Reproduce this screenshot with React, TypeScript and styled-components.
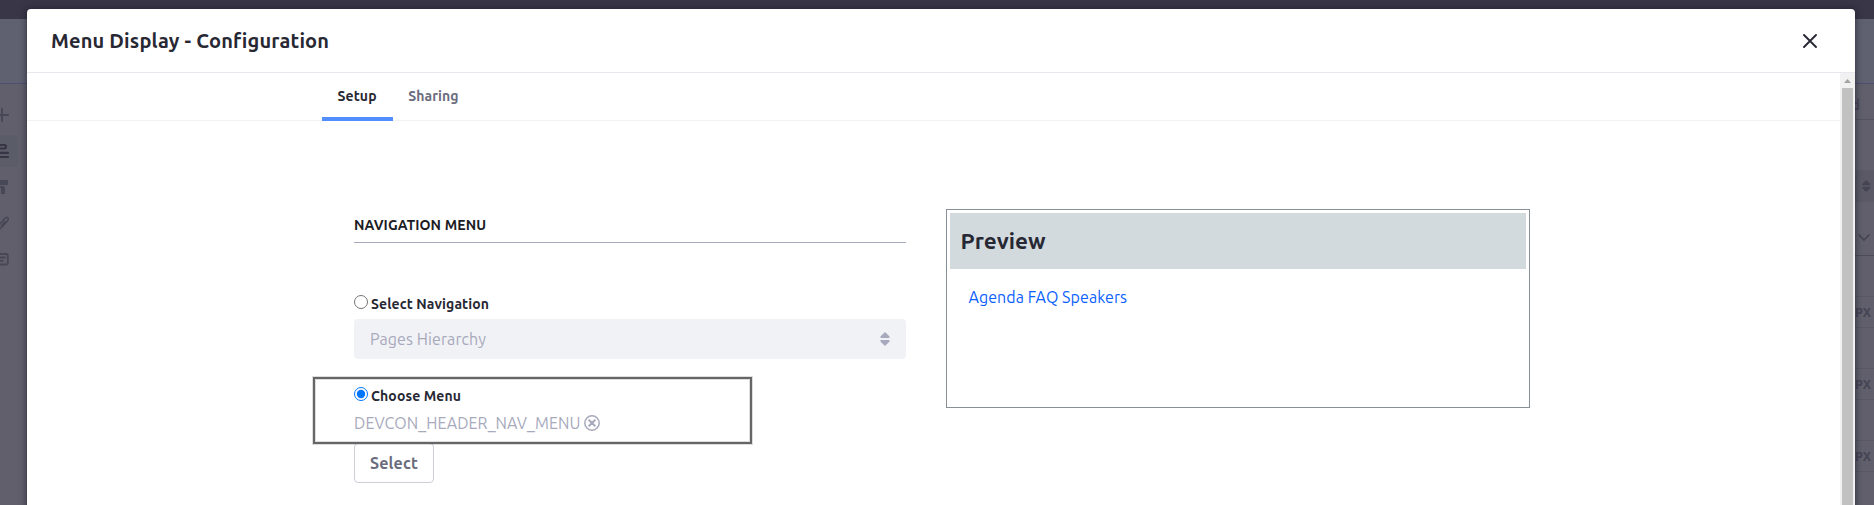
import React from 'react';
import styled, { createGlobalStyle } from 'styled-components';

const GlobalStyle = createGlobalStyle`
  *, *::before, *::after { box-sizing: border-box; }
  body { margin: 0; font-family: Ubuntu, "Noto Sans", sans-serif; color: #272833; overflow: hidden; }
`;

/* Dimmed editor behind the dialog */
const Page = styled.div`
  position: relative;
  display: flex;
  flex-direction: column;
  height: 505px;
  overflow: hidden;
  background: #605f6b;
`;
const ControlBar = styled.div`height: 19px; flex: none; background: #393647;`;
const Toolbar = styled.div`height: 65px; flex: none; background: #5f6070; border-bottom: 1px solid #4e5073;`;
const Workspace = styled.div`display: flex; justify-content: space-between; flex: 1; min-height: 0;`;
const Rail = styled.nav`
  display: flex;
  flex-direction: column;
  width: 27px;
  padding-top: 15px;
  gap: 4px;
`;
const RailItem = styled.div<{ $active?: boolean }>`
  display: flex;
  align-items: center;
  justify-content: flex-end;
  width: 18px;
  height: 32px;
  padding-right: 9px;
  overflow: hidden;
  border-radius: 0 4px 4px 0;
  color: ${p => (p.$active ? '#363545' : '#484755')};
  background: ${p => (p.$active ? '#5a5c68' : 'transparent')};
  svg { flex: none; }
`;
const SidePanel = styled.aside`
  width: 19px;
  display: flex;
  flex-direction: column;
  color: #454453;
  background: #605f6b;
`;
const PanelTitle = styled.div`
  display: flex;
  justify-content: flex-end;
  height: 36px;
  flex: none;
  padding: 10px 14px 0 0;
  border-bottom: 1px solid #53525f;
  font-size: 14px;
  line-height: 22px;
  font-weight: 700;
  color: #484759;
`;
const PanelSelect = styled.div`
  height: 32px;
  flex: none;
  margin-top: 50px;
  display: flex;
  align-items: center;
  padding-left: 7px;
  background: #5a5965;
`;
const PanelToggle = styled.div`
  height: 54px;
  flex: none;
  padding: 29px 0 0 3px;
  border-bottom: 1px solid #4d4c5b;
  svg { display: block; }
`;
const Unit = styled.div`
  height: 32px;
  flex: none;
  margin-top: 40px;
  border: solid #595864;
  border-width: 1px 0;
  font-size: 12.5px;
  line-height: 31px;
  font-weight: 700;
`;

/* Dialog */
const Dialog = styled.section`
  position: absolute;
  top: 9px;
  left: 27px;
  width: 1828px;
  height: 520px;
  display: flex;
  flex-direction: column;
  background: #fff;
  border-radius: 4px 4px 0 0;
  overflow: hidden;
  box-shadow: 0 0 7px rgba(20, 18, 35, 0.7);
`;
const DialogHeader = styled.header`
  height: 64px;
  flex: none;
  display: flex;
  align-items: center;
  justify-content: space-between;
  padding: 0 38px 0 24px;
  border-bottom: 1px solid #e7e7ed;
`;
const DialogTitle = styled.h1`
  margin: 0;
  font-size: 20px;
  line-height: 30px;
  font-weight: 700;
  letter-spacing: 0.17px;
`;
const CloseButton = styled.button`
  display: flex;
  padding: 0;
  border: 0;
  background: none;
  color: #272833;
`;
const DialogBody = styled.div`flex: 1; min-height: 0; display: flex;`;
const Content = styled.div`flex: 1; min-width: 0;`;
const ScrollTrack = styled.div`
  width: 15px;
  display: flex;
  flex-direction: column;
  align-items: center;
  background: #f1f1f1;
  svg { display: block; flex: none; }
`;
const ScrollThumb = styled.div`flex: 1; width: 11px; background: #c1c1c1;`;

const Tabs = styled.div`
  display: flex;
  height: 48px;
  padding-left: 295px;
  border-bottom: 1px solid #f1f2f5;
`;
const Tab = styled.div<{ $active?: boolean }>`
  height: 48px;
  padding: 6px 16px 0 15.5px;
  border-bottom: 4px solid ${p => (p.$active ? '#528eff' : 'transparent')};
  color: ${p => (p.$active ? '#272833' : '#6b6c7e')};
  font-size: 14px;
  line-height: 34px;
  font-weight: 700;
  letter-spacing: 0.1px;
`;
const Columns = styled.div`
  display: grid;
  grid-template-columns: 552px 584px;
  column-gap: 40px;
  align-items: start;
  padding: 88px 0 0 327px;
`;
const Form = styled.form`display: flex; flex-direction: column; padding-top: 4px;`;
const SectionTitle = styled.h2`
  margin: 0 0 50px;
  padding-bottom: 5px;
  border-bottom: 1px solid #a7a9bc;
  color: #1c1c24;
  font-size: 14px;
  line-height: 24px;
  font-weight: 700;
  letter-spacing: 0.12px;
`;
const Option = styled.label`
  display: flex;
  gap: 3px;
  height: 22px;
  font-size: 14px;
  line-height: 22px;
  font-weight: 700;
  letter-spacing: 0.11px;
`;
const Radio = styled.input`width: 14px; height: 14px; margin: 1.5px 0 0;`;
const SelectField = styled.div`
  display: flex;
  align-items: center;
  justify-content: space-between;
  height: 40px;
  margin: 4px 0 26px;
  padding: 0 16px;
  border-radius: 4px;
  background: #f1f2f5;
  color: #a7a9bc;
  font-size: 16px;
  letter-spacing: 0.09px;
`;
const MenuChoice = styled.div`
  position: relative;
  display: flex;
  flex-direction: column;
  align-items: flex-start;
`;
const Highlight = styled.div`
  position: absolute;
  z-index: 1;
  left: -41px;
  top: -8px;
  width: 439px;
  height: 67px;
  border: 2px solid #666;
  box-shadow: 0 0 0 1px rgba(100, 100, 100, 0.22), inset 0 0 0 1px rgba(100, 100, 100, 0.22);
`;
const MenuName = styled.div`
  display: flex;
  align-items: center;
  gap: 4px;
  height: 24px;
  margin: 4px 0 8px;
  color: #a7a9bc;
  font-size: 16px;
  line-height: 24px;
  letter-spacing: 0.08px;
`;
const SelectButton = styled.button`
  width: 80px;
  height: 40px;
  padding: 0;
  border: 1px solid #cdced9;
  border-radius: 4px;
  background: #fff;
  color: #6b6c7e;
  font: inherit;
  font-weight: 700;
  line-height: 38px;
  letter-spacing: 0.15px;
`;
const Preview = styled.section`height: 199px; padding: 3px; border: 1px solid #869096;`;
const PreviewTitle = styled.h3`
  margin: 0;
  height: 56px;
  padding-left: 10.5px;
  background: #d3dadd;
  font-size: 22.5px;
  line-height: 56px;
  font-weight: 700;
`;
const PreviewLinks = styled.div`
  padding: 16px 0 0 18.5px;
  color: #0b5fff;
  font-size: 16px;
  line-height: 24px;
  letter-spacing: 0.06px;
`;

const CaretDouble = ({ size = 14 }: { size?: number }) => (
  <svg width={(size * 10) / 14} height={size} viewBox="0 0 10 14" fill="currentColor">
    <path d="M5 0 9.6 4.6Q9.8 6 9 6H1Q.2 6 .4 4.6ZM5 14 .4 9.4Q.2 8 1 8H9Q9.8 8 9.6 9.4Z" />
  </svg>
);
const Stroke = ({ d, width = 2 }: { d: string; width?: number }) => (
  <svg width="16" height="16" viewBox="0 0 16 16" fill="none" stroke="currentColor" strokeWidth={width} strokeLinecap="round" strokeLinejoin="round">
    <path d={d} />
  </svg>
);

export default function App() {
  return (
    <Page>
      <GlobalStyle />
      <ControlBar />
      <Toolbar />
      <Workspace>
        <Rail>
          <RailItem><Stroke d="M9 2V14M2 8H15" /></RailItem>
          <RailItem $active><Stroke width={2.2} d="M2 2H11.5Q13 2 13 3.5T11.5 5.5H2M1 9.8H15M1 14H15" /></RailItem>
          <RailItem>
            <svg width="16" height="16" viewBox="0 0 16 16" fill="currentColor">
              <path d="M1 1H14Q15 1 15 2V5Q15 6 14 6H1ZM4 7H10Q12 7 12 9V15H8V9H4Z" />
            </svg>
          </RailItem>
          <RailItem><Stroke width={1.6} d="M6 10 12 3.2Q14 1.8 15 3T14 6.5L8 13Q6 15 4 13M8.5 11 12 6.5" /></RailItem>
          <RailItem><Stroke width={1.8} d="M1 3H13Q14.8 3 14.8 4.8V11.7Q14.8 13.5 13 13.5H1M5 6.5H12M5 9.8H10" /></RailItem>
        </Rail>
        <SidePanel>
          <PanelTitle>d</PanelTitle>
          <PanelSelect><CaretDouble size={12} /></PanelSelect>
          <PanelToggle>
            <svg width="12" height="12" viewBox="0 0 12 12" fill="none" stroke="currentColor" strokeWidth="1.7" strokeLinecap="round">
              <path d="M1 4 6 9 11 4" />
            </svg>
          </PanelToggle>
          <Unit>PX</Unit>
          <Unit>PX</Unit>
          <Unit>PX</Unit>
        </SidePanel>
      </Workspace>

      <Dialog>
        <DialogHeader>
          <DialogTitle>Menu Display - Configuration</DialogTitle>
          <CloseButton aria-label="Close">
            <svg width="14" height="14" viewBox="0 0 14 14" fill="none" stroke="currentColor" strokeWidth="1.9" strokeLinecap="round">
              <path d="M1 1 13 13M13 1 1 13" />
            </svg>
          </CloseButton>
        </DialogHeader>
        <DialogBody>
          <Content>
            <Tabs>
              <Tab $active>Setup</Tab>
              <Tab>Sharing</Tab>
            </Tabs>
            <Columns>
              <Form>
                <SectionTitle>NAVIGATION MENU</SectionTitle>
                <Option><Radio type="radio" name="source" />Select Navigation</Option>
                <SelectField>Pages Hierarchy<CaretDouble /></SelectField>
                <MenuChoice>
                  <Option><Radio type="radio" name="source" defaultChecked />Choose Menu</Option>
                  <MenuName>
                    DEVCON_HEADER_NAV_MENU
                    <svg width="16" height="16" viewBox="0 0 16 16" fill="none" stroke="currentColor">
                      <circle cx="8" cy="8" r="7.2" strokeWidth="1.5" />
                      <path d="M5.2 5.2 10.8 10.8M10.8 5.2 5.2 10.8" strokeWidth="2" strokeLinecap="round" />
                    </svg>
                  </MenuName>
                  <SelectButton type="button">Select</SelectButton>
                  <Highlight />
                </MenuChoice>
              </Form>
              <Preview>
                <PreviewTitle>Preview</PreviewTitle>
                <PreviewLinks>Agenda FAQ Speakers</PreviewLinks>
              </Preview>
            </Columns>
          </Content>
          <ScrollTrack>
            <svg width="15" height="15" viewBox="0 0 15 15" fill="#a3a3a3"><path d="M4 10 7.5 6 11 10Z" /></svg>
            <ScrollThumb />
          </ScrollTrack>
        </DialogBody>
      </Dialog>
    </Page>
  );
}
